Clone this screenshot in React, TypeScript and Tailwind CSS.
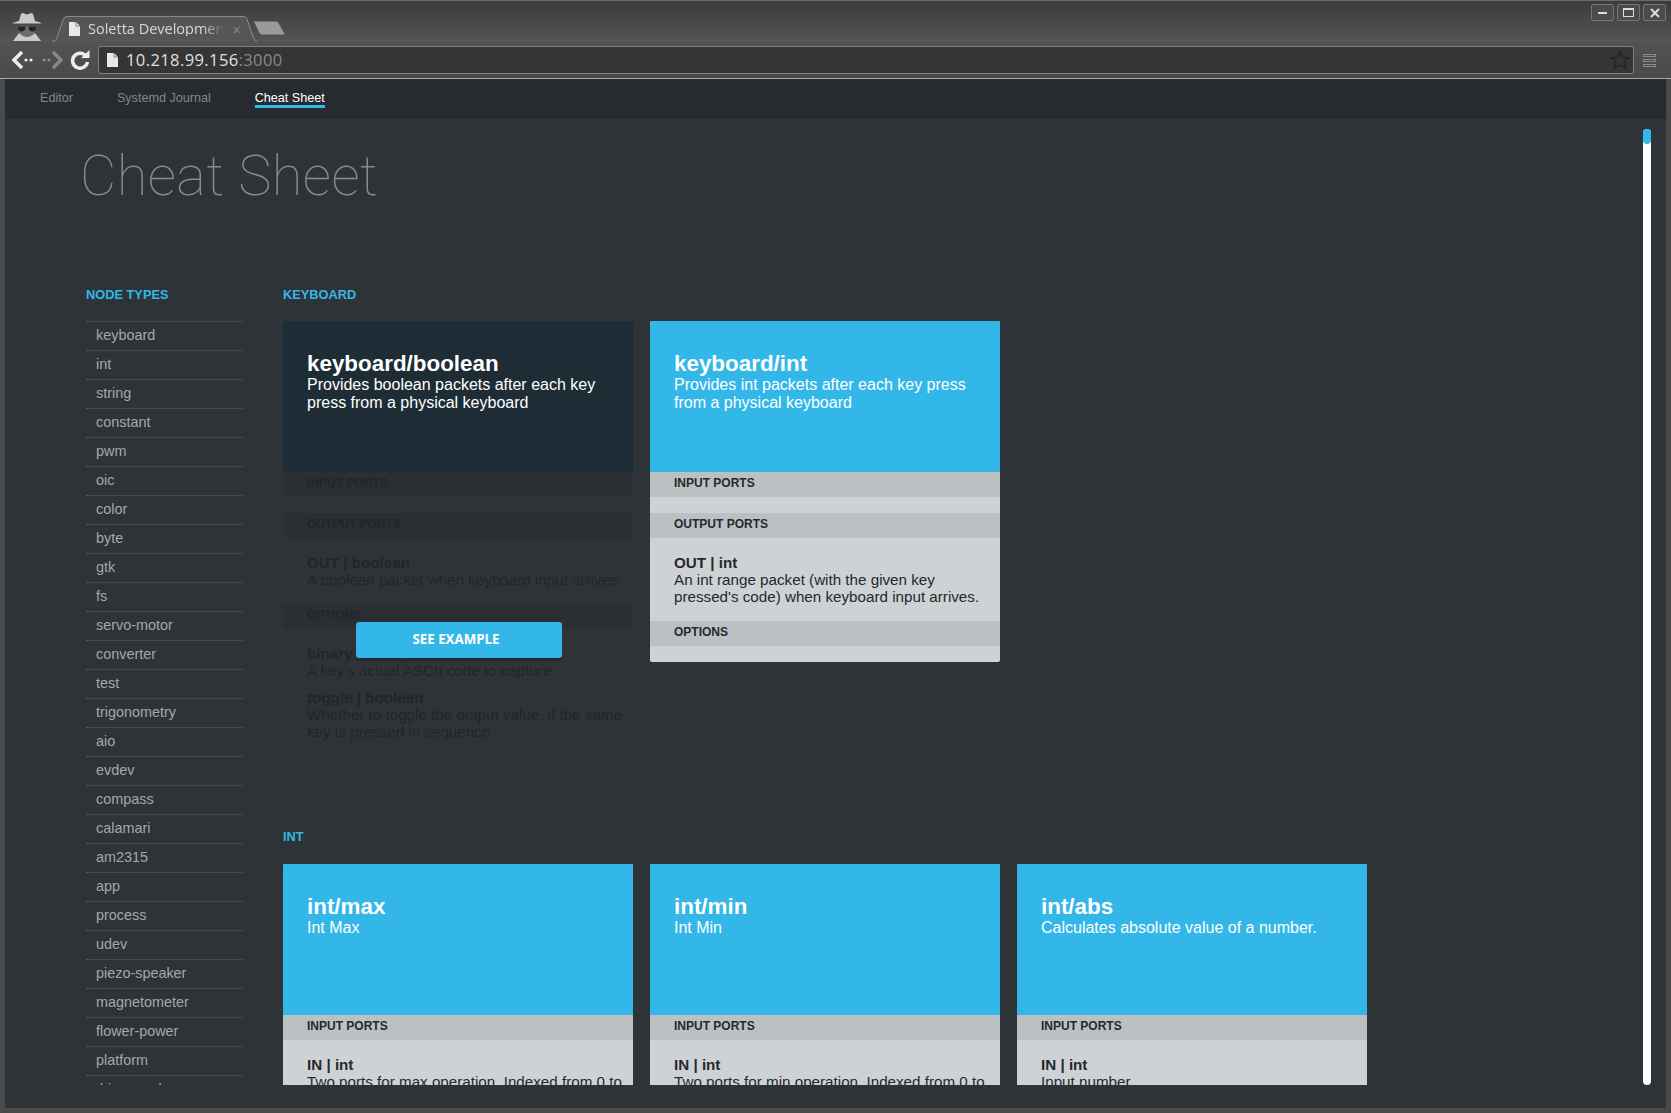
const nodeTypes = [
  "keyboard", "int", "string", "constant", "pwm", "oic", "color", "byte", "gtk", "fs",
  "servo-motor", "converter", "test", "trigonometry", "aio", "evdev", "compass", "calamari",
  "am2315", "app", "process", "udev", "piezo-speaker", "magnetometer", "flower-power",
  "platform", "thingspeak",
];

type Port = { name: string; about: string };
type Node = { title: string; about: string; input: Port[]; output: Port[]; options: Port[]; dim?: boolean };

const keyboardNodes: Node[] = [
  {
    title: "keyboard/boolean",
    about: "Provides boolean packets after each key press from a physical keyboard",
    input: [],
    output: [{ name: "OUT | boolean", about: "A boolean packet when keyboard input arrives." }],
    options: [
      { name: "binary_code | int", about: "A key's actual ASCII code to capture." },
      { name: "toggle | boolean", about: "Whether to toggle the output value, if the same key is pressed in sequence." },
    ],
    dim: true,
  },
  {
    title: "keyboard/int",
    about: "Provides int packets after each key press from a physical keyboard",
    input: [],
    output: [{ name: "OUT | int", about: "An int range packet (with the given key pressed's code) when keyboard input arrives." }],
    options: [],
  },
];

const intNodes: Node[] = [
  {
    title: "int/max",
    about: "Int Max",
    input: [{ name: "IN | int", about: "Two ports for max operation. Indexed from 0 to 31." }],
    output: [],
    options: [],
  },
  {
    title: "int/min",
    about: "Int Min",
    input: [{ name: "IN | int", about: "Two ports for min operation. Indexed from 0 to 31." }],
    output: [],
    options: [],
  },
  {
    title: "int/abs",
    about: "Calculates absolute value of a number.",
    input: [{ name: "IN | int", about: "Input number." }],
    output: [],
    options: [],
  },
];

const Section = ({ label, ports, dim }: { label: string; ports: Port[]; dim?: boolean }) => (
  <>
    <h4
      className={`h-[25px] px-6 text-xs leading-[23px] font-bold ${
        dim ? "bg-[#2b2e32] text-[#22252a]" : "bg-[#bcc0c3] text-[#25282d]"
      }`}
    >
      {label}
    </h4>
    {ports.length === 0 ? (
      <div className="h-4" />
    ) : (
      <div
        className={`pl-6 pr-2 pt-4 pb-4 last:pb-[15px] space-y-[10px] text-[15.2px] leading-[17px] ${
          dim ? "text-[#22252a]" : "text-[#25282d]"
        }`}
      >
        {ports.map((port) => (
          <div key={port.name}>
            <p className="font-bold">{port.name}</p>
            <p>{port.about}</p>
          </div>
        ))}
      </div>
    )}
  </>
);

const NodeCard = ({ node }: { node: Node }) => (
  <div
    className={`relative w-[350px] self-start rounded-[2px] ${
      node.dim ? "bg-[#2f3337]" : "bg-[#ced2d5]"
    }`}
  >
    {node.dim && (
      <button className="absolute z-10 left-[73px] top-[301px] w-[206px] h-9 pr-[6px] rounded-[3px] bg-[#33b7e9] text-white text-[13.3px] font-bold font-['Open_Sans',sans-serif] shadow-[0_3px_0_#26292d]">
        SEE EXAMPLE
      </button>
    )}
    <div
      className={`h-[151px] px-6 pt-[30px] rounded-t-[2px] text-white ${
        node.dim ? "bg-[#1e2c35]" : "bg-[#33b7e9]"
      }`}
    >
      <h3 className="text-[22.4px] leading-[25px] font-bold">{node.title}</h3>
      <p className="text-base leading-[18px]">{node.about}</p>
    </div>
    <Section label="INPUT PORTS" ports={node.input} dim={node.dim} />
    <Section label="OUTPUT PORTS" ports={node.output} dim={node.dim} />
    <Section label="OPTIONS" ports={node.options} dim={node.dim} />
  </div>
);

const Incognito = () => (
  <svg width="34" height="30" viewBox="0 0 34 30" className="shrink-0">
    <path d="M9 9 L11 2 Q12 0.5 14 1.5 L17 2.5 L20 1.5 Q22 0.5 23 2 L25 9 Q30 10 32 11.5 L2 11.5 Q4 10 9 9Z" fill="#c9c9c9" />
    <path d="M8 14 H26 L25 20 Q21 26 17 26 Q13 26 9 20Z" fill="#c9c9c9" opacity="0.25" />
    <path d="M9 21 Q13 25 17 25 Q21 25 25 21 L31 29 H3Z" fill="#c9c9c9" />
    <path d="M8 14.5 H15.5 Q15.5 19.5 11.5 19.5 Q8 19.5 8 14.5Z M18.5 14.5 H26 Q26 19.5 22.5 19.5 Q18.5 19.5 18.5 14.5Z" fill="#222" />
  </svg>
);

const PageGlyph = ({ color }: { color: string }) => (
  <svg width="11" height="14" viewBox="0 0 11 14" className="shrink-0">
    <path d="M0 0 H7 L11 4 V14 H0Z" fill={color} />
    <path d="M7 0 V4 H11" fill="none" stroke="#555" strokeWidth="0.7" />
  </svg>
);

const WindowButton = ({ children }: { children: React.ReactNode }) => (
  <div className="w-[23px] h-[17px] flex items-center justify-center rounded-[2px] border border-[#777] bg-[#4b4b4b]">
    {children}
  </div>
);

const BrowserChrome = () => (
  <header className="shrink-0 font-['Open_Sans',sans-serif]">
    <div className="h-[42px] flex items-end justify-between pl-[10px] pr-[5px] border-t border-[#6b6b6b] bg-gradient-to-b from-[#3c3c3c] to-[#555555]">
      <div className="flex items-end">
        <Incognito />
        <div className="relative ml-[8px] w-[205px] h-[26px] flex items-center pl-[17px] gap-2">
          <svg width="205" height="26" viewBox="0 0 205 26" className="absolute inset-0">
            <path d="M0 25.5 Q4 25.5 5 22 L11 4 Q12 0.5 15 0.5 H191 Q194 0.5 195 3 L201 21 Q203 25.5 205 25.5" fill="#555" stroke="#8a8a8a" />
          </svg>
          <span className="relative"><PageGlyph color="#e8e8e8" /></span>
          <span className="relative w-[136px] overflow-hidden whitespace-nowrap text-[14.5px] leading-none text-[#d8d8d8] [mask-image:linear-gradient(to_right,black_85%,transparent)]">
            Soletta Development
          </span>
          <span className="relative text-[11px] leading-none text-[#888]">✕</span>
        </div>
        <svg width="32" height="14" viewBox="0 0 32 14" className="mb-[7px] -ml-[3px]">
          <path d="M0 0.5 H22 Q24 0.5 25 3 L30 12 Q31 13.5 29 13.5 H8 Q6 13.5 5 11Z" fill="#9a9a9a" />
        </svg>
      </div>
      <div className="self-start mt-[3px] flex gap-[3px]">
        <WindowButton><div className="w-[9px] h-[2px] bg-[#ddd]" /></WindowButton>
        <WindowButton><div className="w-[11px] h-[9px] border border-[#ddd] border-t-2" /></WindowButton>
        <WindowButton>
          <svg width="10" height="10" viewBox="0 0 10 10"><path d="M1 1 L9 9 M9 1 L1 9" stroke="#ddd" strokeWidth="2" /></svg>
        </WindowButton>
      </div>
    </div>
    <div className="h-[36px] flex items-center pl-[12px] pr-[15px] bg-gradient-to-b from-[#525252] to-[#4a4a4a]">
      <svg width="22" height="20" viewBox="0 0 22 20" className="shrink-0">
        <path d="M10 2 L2 10 L10 18" fill="none" stroke="#eee" strokeWidth="3.5" />
        <circle cx="14" cy="10" r="1.6" fill="#eee" /><circle cx="19" cy="10" r="1.6" fill="#eee" />
      </svg>
      <svg width="22" height="20" viewBox="0 0 22 20" className="ml-[7px] shrink-0">
        <circle cx="3" cy="10" r="1.6" fill="#888" /><circle cx="8" cy="10" r="1.6" fill="#888" />
        <path d="M12 2 L20 10 L12 18" fill="none" stroke="#888" strokeWidth="3.5" />
      </svg>
      <svg width="20" height="21" viewBox="0 0 20 21" className="ml-[7px] shrink-0">
        <path d="M16 6 A7.5 7.5 0 1 0 17.5 12" fill="none" stroke="#eee" strokeWidth="3.5" />
        <path d="M11 8 H19.5 V0Z" fill="#eee" />
      </svg>
      <div className="ml-[8px] flex-1 h-[28px] flex items-center pl-2 pr-[3px] rounded-[3px] border border-[#808080] bg-[#353535]">
        <PageGlyph color="#e8e8e8" />
        <span className="ml-[8px] text-[16.5px] tracking-[0.4px] text-[#e0e0e0]">
          10.218.99.156<span className="text-[#8a8a8a]">:3000</span>
        </span>
        <svg width="20" height="20" viewBox="0 0 24 24" className="ml-auto">
          <path d="M12 2 L15 9 L22.5 9.5 L17 14.5 L18.8 22 L12 18 L5.2 22 L7 14.5 L1.5 9.5 L9 9Z" fill="none" stroke="#222" strokeWidth="1.5" />
        </svg>
      </div>
      <div className="ml-[9px] w-[13px] shrink-0 space-y-[2px]">
        <div className="h-[3px] border border-[#8a8a8a]" />
        <div className="h-[3px] border border-[#8a8a8a]" />
        <div className="h-[3px] border border-[#8a8a8a]" />
      </div>
    </div>
    <div className="h-px bg-[#a8a8a8]" />
  </header>
);

const App = () => {
  return (
    <div className="w-[1671px] h-[1113px] flex flex-col overflow-hidden bg-[#4a4a4a] font-['Liberation_Sans',sans-serif]">
      <BrowserChrome />
      <div className="flex-1 min-h-0 ml-[5px] mr-[5px] mb-[5px] flex flex-col">
        <nav className="shrink-0 h-[40px] pl-[35px] flex gap-[44px] bg-[#272a2e] text-[12.6px]">
          <a className="pt-[10px] text-[#83878a]">Editor</a>
          <a className="pt-[10px] text-[#83878a]">Systemd Journal</a>
          <a className="h-[29px] pt-[10px] border-b-[3px] border-[#33b7e9] text-white">Cheat Sheet</a>
        </nav>
        <main className="flex-1 min-h-0 flex bg-[#2e3337] pb-[23px]">
          <div className="flex-1 min-w-0 overflow-hidden pl-[81px]">
            <h1 className="-ml-[6px] pt-[25px] text-[56px] leading-[64px] tracking-[0.4px] font-thin text-[#868b8e] font-['Roboto',sans-serif]">
              Cheat Sheet
            </h1>
            <div className="mt-[80px] flex gap-[39px]">
              <aside className="w-[158px] shrink-0">
                <h2 className="text-[12.8px] leading-[14px] font-bold text-[#33b7e9]">NODE TYPES</h2>
                <ul className="mt-[19px] text-[14.4px] text-[#a4a8aa]">
                  {nodeTypes.map((name) => (
                    <li key={name} className="h-[29px] pl-[10px] leading-[27px] border-t border-dotted border-[#5a5e62]">
                      {name}
                    </li>
                  ))}
                </ul>
              </aside>
              <div className="flex-1 min-w-0">
                <h2 className="text-[12.8px] leading-[14px] font-bold text-[#33b7e9]">KEYBOARD</h2>
                <div className="mt-[19px] flex gap-[17px]">
                  {keyboardNodes.map((node) => (
                    <NodeCard key={node.title} node={node} />
                  ))}
                </div>
                <h2 className="mt-[75px] text-[12.8px] leading-[14px] font-bold text-[#33b7e9]">INT</h2>
                <div className="mt-5 flex gap-[17px]">
                  {intNodes.map((node) => (
                    <NodeCard key={node.title} node={node} />
                  ))}
                </div>
              </div>
            </div>
          </div>
          <div className="shrink-0 w-2 mt-[10px] mr-[15px] rounded-full bg-white">
            <div className="h-[15px] rounded-full bg-[#33b7e9]" />
          </div>
        </main>
      </div>
    </div>
  );
};

export default App;
